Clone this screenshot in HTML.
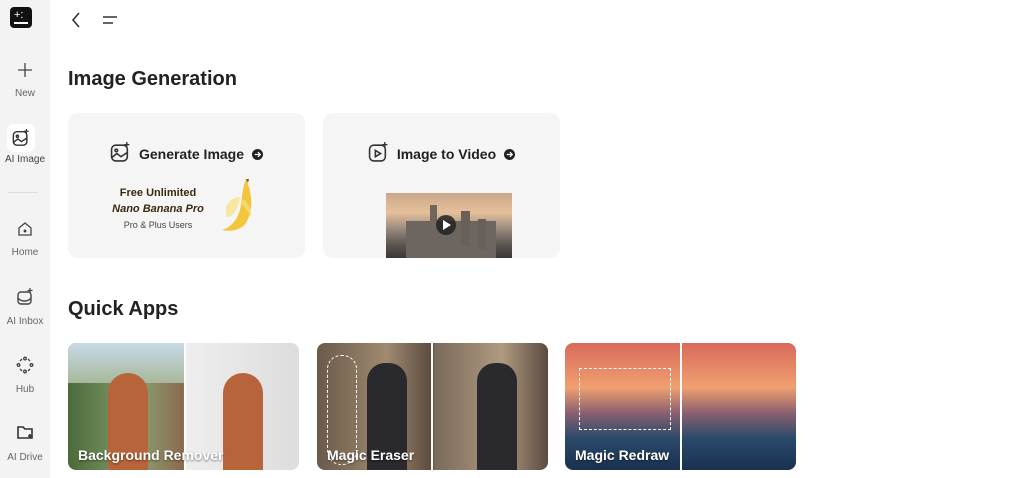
<!DOCTYPE html>
<html><head><meta charset="utf-8"><style>
*{margin:0;padding:0;box-sizing:border-box}
body{width:1024px;height:478px;overflow:hidden;background:#fff;font-family:"Liberation Sans",sans-serif;color:#222;position:relative}
.side{position:absolute;left:0;top:0;width:50px;height:478px;background:#f3f3f3}
.si{position:absolute;left:0;width:50px;text-align:center;font-size:10px;color:#666}
.si svg{display:block;margin:0 auto 10px}
h2{position:absolute;left:68px;font-size:20px;font-weight:bold;color:#222}
.card{position:absolute;top:113px;width:237px;height:145px;background:#f5f5f5;border-radius:10px}
.ct{position:absolute;top:29px;left:0;width:100%;text-align:center;font-size:14px;font-weight:bold;color:#222}
.arr{display:inline-block;vertical-align:-1px;margin-left:8px}
.app{position:absolute;top:343px;width:231px;height:127px;border-radius:8px;overflow:hidden}
.app .l{position:absolute;bottom:7px;left:10px;color:#fff;font-weight:bold;font-size:14px;text-shadow:0 1px 2px rgba(0,0,0,.5)}
.app .d{position:absolute;top:0;bottom:0;width:2px;background:#fff}
</style></head><body>
<div class="side">
 <div style="position:absolute;left:10px;top:7px;width:22px;height:21px;background:#111;border-radius:4px"><span style="color:#fff;font-size:11px;position:absolute;left:4px;top:2px">+:</span><div style="position:absolute;left:4px;right:4px;bottom:4px;height:2px;background:#fff"></div></div>
 <div class="si" style="top:62px"><svg width="16" height="16" viewBox="0 0 16 16"><path d="M8 1v14M1 8h14" stroke="#444" stroke-width="1.3"/></svg>New</div>
 <div style="position:absolute;left:7px;top:124px;width:28px;height:28px;background:#fff;border-radius:7px"></div>
 <div class="si" style="top:129px;left:-4px"><svg width="18" height="18" viewBox="0 0 20 20" fill="none" stroke="#333" stroke-width="1.6" style="margin-bottom:7px"><rect x="1.5" y="3" width="15" height="15" rx="4"/><path d="M1.5 15l5-4 4 3 6-4"/><circle cx="6" cy="8" r="1.2"/><path d="M16 0v5M13.5 2.5h5" stroke-width="1.3"/></svg><span style="color:#444;position:relative;left:4px">AI Image</span></div>
 <div style="position:absolute;left:8px;top:192px;width:30px;height:1px;background:#ddd"></div>
 <div class="si" style="top:221px"><svg width="16" height="16" viewBox="0 0 16 16" fill="none" stroke="#444" stroke-width="1.3"><path d="M2 7l6-5 6 5v7H2z"/><circle cx="8" cy="10" r=".8" fill="#444"/></svg>Home</div>
 <div class="si" style="top:288px"><svg width="18" height="18" viewBox="0 0 18 18" fill="none" stroke="#444" stroke-width="1.4"><rect x="2" y="4" width="13" height="12" rx="3"/><path d="M2 10c3 4 10 4 13 0"/><path d="M14 0v5M11.5 2.5h5" stroke-width="1.2"/></svg>AI Inbox</div>
 <div class="si" style="top:356px"><svg width="18" height="18" viewBox="0 0 18 18" fill="none" stroke="#444" stroke-width="1.3"><circle cx="9" cy="2.5" r="1.3"/><circle cx="9" cy="15.5" r="1.3"/><circle cx="2.5" cy="9" r="1.3"/><circle cx="15.5" cy="9" r="1.3"/><path d="M4 5l2-2M12 3l2 2M4 13l2 2M12 15l2-2"/></svg>Hub</div>
 <div class="si" style="top:424px"><svg width="18" height="18" viewBox="0 0 18 18" fill="none" stroke="#333" stroke-width="1.6"><path d="M2 3h5l2 2h7v9H2z"/><path d="M12 12h4M14 10v4"/></svg>AI Drive</div>
</div>
<svg style="position:absolute;left:70px;top:12px" width="12" height="16" viewBox="0 0 12 16" fill="none" stroke="#333" stroke-width="1.6"><path d="M9 1L3 8l6 7"/></svg>
<svg style="position:absolute;left:102px;top:14px" width="16" height="12" viewBox="0 0 16 12" stroke="#333" stroke-width="1.6"><path d="M1 3h14M1 9h10"/></svg>
<h2 style="top:68px">Image Generation</h2>
<div class="card" style="left:68px">
 <div class="ct"><svg width="21" height="21" viewBox="0 0 20 20" fill="none" stroke="#333" stroke-width="1.5" style="vertical-align:-4px;margin-right:8px"><rect x="1.5" y="3" width="15" height="15" rx="4"/><path d="M1.5 15l5-4 4 3 6-4"/><circle cx="6" cy="8" r="1.2"/><path d="M16 0v5M13.5 2.5h5" stroke-width="1.3"/></svg>Generate Image<svg class="arr" width="11" height="11" viewBox="0 0 12 12"><circle cx="6" cy="6" r="6" fill="#222"/><path d="M3 6h6M6.5 3.5L9 6l-2.5 2.5" stroke="#fff" stroke-width="1.4" fill="none"/></svg></div>
 <div style="position:absolute;left:30px;top:72px;width:120px;text-align:center;line-height:16px">
  <div style="font-size:11px;font-weight:bold;color:#3a2a10">Free Unlimited</div>
  <div style="font-size:11px;font-weight:bold;font-style:italic;color:#3a2a10">Nano Banana Pro</div>
  <div style="font-size:9px;color:#444">Pro &amp; Plus Users</div>
 </div>
 <svg style="position:absolute;left:148px;top:64px" width="44" height="58" viewBox="0 0 44 58"><path d="M30 2c6 14 8 30 0 44-5 7-15 9-24 7 10-3 17-12 19-25 1-10 2-18 5-26z" fill="#f2c53a"/><path d="M30 2l3 0 -1 4z" fill="#7a5a20"/><path d="M10 30c4-8 10-11 14-9-2 10-6 19-14 19z" fill="#f8e7a0"/><path d="M26 22c6 2 9 10 9 18-3-6-6-10-9-12z" fill="#f5d870"/></svg>
</div>
<div class="card" style="left:323px">
 <div class="ct"><svg width="21" height="21" viewBox="0 0 20 20" fill="none" stroke="#333" stroke-width="1.5" style="vertical-align:-4px;margin-right:8px"><rect x="1.5" y="3" width="15" height="15" rx="4"/><path d="M7 8v6l5-3z"/><path d="M16 0v5M13.5 2.5h5" stroke-width="1.3"/></svg>Image to Video<svg class="arr" width="11" height="11" viewBox="0 0 12 12"><circle cx="6" cy="6" r="6" fill="#222"/><path d="M3 6h6M6.5 3.5L9 6l-2.5 2.5" stroke="#fff" stroke-width="1.4" fill="none"/></svg></div>
 <div style="position:absolute;left:63px;top:80px;width:126px;height:65px;overflow:hidden;background:linear-gradient(#c9a78a 0%,#e6c09a 30%,#9a8a7e 55%,#5a5450 80%,#3a3634 100%)">
  <div style="position:absolute;left:20px;top:28px;width:90px;height:37px;background:#6d6560"></div>
  <div style="position:absolute;left:44px;top:12px;width:7px;height:40px;background:#70665e"></div>
  <div style="position:absolute;left:75px;top:18px;width:9px;height:35px;background:#6a605a"></div>
  <div style="position:absolute;left:92px;top:26px;width:8px;height:30px;background:#6a605a"></div>
  <div style="position:absolute;left:50px;top:22px;width:20px;height:20px;background:#222;border-radius:50%;opacity:.85"></div>
  <div style="position:absolute;left:57px;top:27px;border-left:8px solid #fff;border-top:5px solid transparent;border-bottom:5px solid transparent"></div>
 </div>
</div>
<h2 style="top:298px">Quick Apps</h2>
<div class="app" style="left:68px;background:linear-gradient(90deg,#4a6a3a 0%,#8aa070 30%,#8a6a50 50%,#eee 51%,#ddd 100%)">
 <div style="position:absolute;left:0;top:0;width:116px;height:40px;background:linear-gradient(#c8dbe8,#a7b89a)"></div>
 <div style="position:absolute;left:40px;top:30px;width:40px;height:97px;background:#b8643a;border-radius:20px 20px 0 0"></div>
 <div style="position:absolute;left:155px;top:30px;width:40px;height:97px;background:#b8643a;border-radius:20px 20px 0 0"></div>
 <div class="d" style="left:116px"></div><div class="l">Background Remover</div></div>
<div class="app" style="left:317px;background:linear-gradient(90deg,#6a5a4a,#a08a70 30%,#5a4a3e 50%,#7a6a5a 51%,#b09a80 80%,#5a4a40)">
 <div style="position:absolute;left:50px;top:20px;width:40px;height:107px;background:#2a2a2e;border-radius:18px 18px 0 0"></div>
 <div style="position:absolute;left:160px;top:20px;width:40px;height:107px;background:#2a2a2e;border-radius:18px 18px 0 0"></div>
 <div style="position:absolute;left:10px;top:12px;width:30px;height:110px;border:1.5px dashed #fff;border-radius:14px"></div>
 <div class="d" style="left:114px"></div><div class="l">Magic Eraser</div></div>
<div class="app" style="left:565px;background:linear-gradient(#d86a5a 0%,#f0a070 35%,#8a6070 55%,#2a4a6a 75%,#1a3050 100%)">
 <div style="position:absolute;left:14px;top:25px;width:92px;height:62px;border:1.5px dashed #fff"></div>
 <div class="d" style="left:115px"></div><div class="l">Magic Redraw</div></div>
</body></html>
